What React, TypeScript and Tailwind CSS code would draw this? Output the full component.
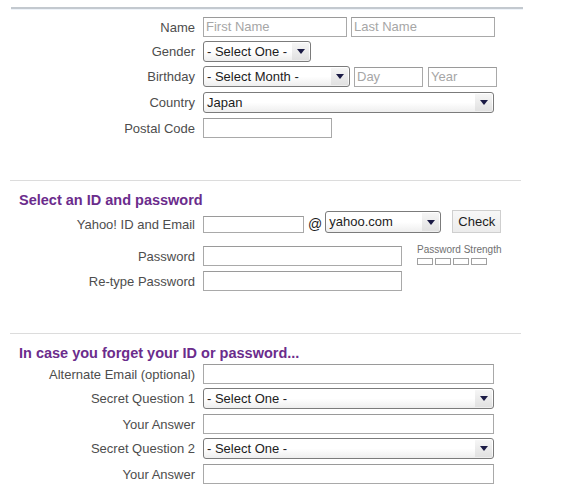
import type { ReactNode } from 'react';

const font = { fontFamily: '"Liberation Sans", Arial, sans-serif' };

function Row({ label, children, className = '', labelClass = '' }: { label: string; children: ReactNode; className?: string; labelClass?: string }) {
  return (
    <div className={'flex items-center ' + className}>
      <div className={'w-[195px] shrink-0 text-right text-[13px] leading-[15px] text-[#4d4d4d] ' + labelClass}>{label}</div>
      <div className="ml-[8px] flex items-center">{children}</div>
    </div>
  );
}

function TextInput({ w, h = 'h-[20px]', placeholder }: { w: string; h?: string; placeholder?: string }) {
  return (
    <div className={`${w} ${h} flex items-center border border-[#a9a9a9] border-t-[#9a9a9a] bg-white px-[2px] text-[13px] text-[#a6a6a6]`}>
      {placeholder}
    </div>
  );
}

function Select({ w, h = 'h-[21px]', value }: { w: string; h?: string; value: string }) {
  return (
    <div className={`${w} ${h} flex items-stretch rounded-[3px] border border-[#7b7b7b] bg-gradient-to-b from-white via-white to-[#eeeeee] overflow-hidden`}>
      <div className="flex flex-1 items-center pl-[3px] text-[13px] text-[#1c1c1c] whitespace-nowrap overflow-hidden">{value}</div>
      <div className="my-[1px] mr-[1px] flex w-[17px] items-center justify-center bg-gradient-to-b from-[#f6f6f6] to-[#e1e1e1]">
        <svg width="8" height="5" viewBox="0 0 8 5">
          <path d="M0 0 L8 0 L4 5 Z" fill="#1b1b45" />
        </svg>
      </div>
    </div>
  );
}

export default function App() {
  return (
    <div className="relative h-[504px] w-[569px] overflow-hidden bg-white pt-[7px]" style={font}>
      <div className="ml-[11px] h-[2px] w-[512px] bg-[#c3c9cf]" />
      <div className="ml-[11px] h-[1px] w-[512px] bg-[#eef3f9]" />

      <Row label="Name" className="mt-[7px]">
        <TextInput w="w-[144px]" placeholder="First Name" />
        <div className="ml-[4px]">
          <TextInput w="w-[144px]" placeholder="Last Name" />
        </div>
      </Row>
      <Row label="Gender" className="mt-[4px]">
        <Select w="w-[108px]" value="- Select One -" />
      </Row>
      <Row label="Birthday" className="mt-[4px]">
        <Select w="w-[147px]" value="- Select Month -" />
        <div className="ml-[4px]">
          <TextInput w="w-[69px]" placeholder="Day" />
        </div>
        <div className="ml-[5px]">
          <TextInput w="w-[69px]" placeholder="Year" />
        </div>
      </Row>
      <Row label="Country" className="mt-[5px]">
        <Select w="w-[291px]" value="Japan" />
      </Row>
      <Row label="Postal Code" className="mt-[5px]">
        <TextInput w="w-[129px]" />
      </Row>

      <div className="ml-[10px] mt-[42px] h-[1px] w-[511px] bg-[#dcdcdc]" />
      <div className="mt-[11px] pl-[19px] text-[14.5px] font-bold leading-[17px] text-[#6b2c8c]">Select an ID and password</div>

      <div className="mt-[1px] flex h-[23px] items-end">
        <div className="mb-[1px] w-[195px] shrink-0 text-right text-[13px] leading-[15px] text-[#4d4d4d]">Yahoo! ID and Email</div>
        <div className="ml-[8px] flex h-[23px] items-end">
          <TextInput w="w-[101px]" h="h-[17px]" />
          <span className="ml-[4px] mr-[3px] mb-[1px] text-[14px] leading-[16px] text-[#1c1c1c]">@</span>
          <Select w="w-[116px]" h="h-[22px]" value="yahoo.com" />
          <div className="ml-[11px] flex h-[23px] w-[49px] items-center justify-center border border-[#cfcfcf] bg-gradient-to-b from-[#f7f7f7] to-[#ececec] text-[13px] text-[#1c1c1c]">
            Check
          </div>
        </div>
      </div>

      <div className="mt-[13px] flex items-start">
        <div className="flex h-[20px] w-[195px] shrink-0 items-center justify-end text-[13px] leading-[15px] text-[#4d4d4d]">Password</div>
        <div className="ml-[8px]">
          <TextInput w="w-[199px]" />
        </div>
        <div className="ml-[15px] -mt-[2px] flex flex-col">
          <div className="text-[10px] leading-[12px] text-[#707070]">Password Strength</div>
          <div className="mt-[2px] flex gap-[2px]">
            <div className="h-[7px] w-[16px] border border-[#a0a0a0]" />
            <div className="h-[7px] w-[16px] border border-[#a0a0a0]" />
            <div className="h-[7px] w-[16px] border border-[#a0a0a0]" />
            <div className="h-[7px] w-[16px] border border-[#a0a0a0]" />
          </div>
        </div>
      </div>
      <Row label="Re-type Password" className="mt-[5px]">
        <TextInput w="w-[199px]" />
      </Row>

      <div className="ml-[10px] mt-[42px] h-[1px] w-[511px] bg-[#dcdcdc]" />
      <div className="mt-[11px] pl-[19px] text-[14.5px] font-bold leading-[17px] text-[#6b2c8c]">In case you forget your ID or password...</div>

      <Row label="Alternate Email (optional)" className="mt-[2px]">
        <TextInput w="w-[291px]" />
      </Row>
      <Row label="Secret Question 1" className="mt-[4px]">
        <Select w="w-[291px]" value="- Select One -" />
      </Row>
      <Row label="Your Answer" className="mt-[5px]">
        <TextInput w="w-[291px]" />
      </Row>
      <Row label="Secret Question 2" className="mt-[4px]">
        <Select w="w-[291px]" value="- Select One -" />
      </Row>
      <Row label="Your Answer" className="mt-[5px]">
        <TextInput w="w-[291px]" />
      </Row>
    </div>
  );
}
